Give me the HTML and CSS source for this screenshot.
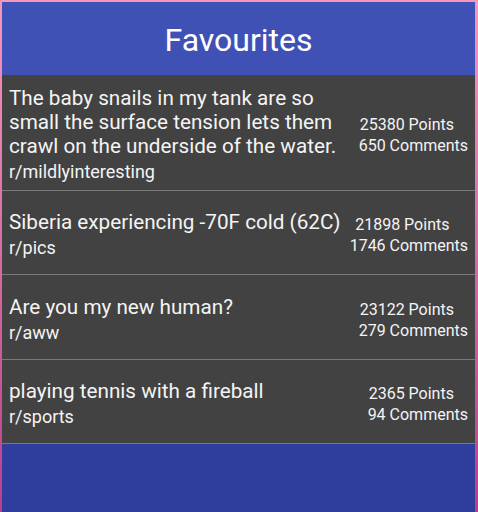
FILE: index.html
```html
<!DOCTYPE html>
<html>
<head>
<meta charset="utf-8">
<link rel="stylesheet" href="styles.css">
</head>
<body>
<div class="app">
  <header class="app-header">Favourites</header>
  <ul class="fav-list">
    <li class="fav-item">
      <div class="fav-main">
        <div class="fav-title">The baby snails in my tank are so small the surface tension lets them crawl on the underside of the water.</div>
        <div class="fav-sub">r/mildlyinteresting</div>
      </div>
      <div class="fav-stats">
        <div class="fav-points">25380 Points</div>
        <div class="fav-comments">650 Comments</div>
      </div>
    </li>
    <li class="fav-item">
      <div class="fav-main">
        <div class="fav-title">Siberia experiencing -70F cold (62C)</div>
        <div class="fav-sub">r/pics</div>
      </div>
      <div class="fav-stats">
        <div class="fav-points">21898 Points</div>
        <div class="fav-comments">1746 Comments</div>
      </div>
    </li>
    <li class="fav-item">
      <div class="fav-main">
        <div class="fav-title">Are you my new human?</div>
        <div class="fav-sub">r/aww</div>
      </div>
      <div class="fav-stats">
        <div class="fav-points">23122 Points</div>
        <div class="fav-comments">279 Comments</div>
      </div>
    </li>
    <li class="fav-item">
      <div class="fav-main">
        <div class="fav-title">playing tennis with a fireball</div>
        <div class="fav-sub">r/sports</div>
      </div>
      <div class="fav-stats">
        <div class="fav-points">2365 Points</div>
        <div class="fav-comments">94 Comments</div>
      </div>
    </li>
  </ul>
</div>
</body>
</html>
```
FILE: styles.css
```css
html, body {
  margin: 0;
  padding: 0;
  height: 100%;
}
body {
  background: linear-gradient(to bottom, #f598bc, #b8408a);
  font-family: Roboto, "Noto Sans", sans-serif;
  overflow: hidden;
}
.app {
  margin: 2px 3px 0 2px;
  height: 510px;
  background: #2f3d9c;
  display: flex;
  flex-direction: column;
}
.app-header {
  height: 73px;
  box-sizing: border-box;
  padding-top: 3px;
  background: #3f51b5;
  color: #ffffff;
  font-size: 32px;
  display: flex;
  align-items: center;
  justify-content: center;
}
.fav-list {
  list-style: none;
  margin: 0;
  padding: 0;
}
.fav-item {
  display: flex;
  align-items: center;
  box-sizing: border-box;
  min-height: 84.4px;
  padding: 11px 7px 6px 7px;
  background: #424242;
  border-bottom: 1px solid #7a7a7a;
  color: #f4f4f4;
}
.fav-main {
  flex: 1;
  min-width: 0;
  padding-right: 4px;
}
.fav-title {
  font-size: 20.7px;
  line-height: 24px;
}
.fav-sub {
  font-size: 18px;
  line-height: 24px;
  margin-top: 2px;
}
.fav-stats {
  flex: none;
  text-align: center;
  font-size: 16px;
  line-height: 21px;
}
.fav-points {
  padding-right: 13px;
}
```
